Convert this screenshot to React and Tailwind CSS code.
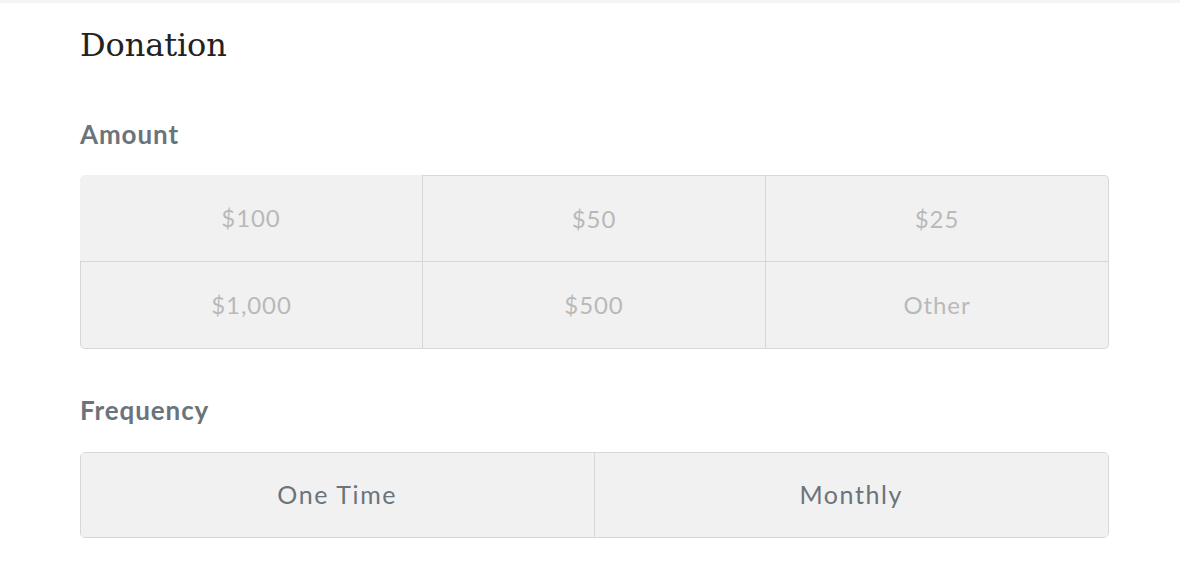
import React from 'react';

const amounts = ['$100', '$50', '$25', '$1,000', '$500', 'Other'];

// per-cell borders so the top-left cell reads borderless like the reference
const amountCellBorders = [
  'border-r border-b rounded-tl-[5px]',
  'border-t border-r border-b',
  'border-t border-r border-b rounded-tr-[5px]',
  'border-l border-r border-b rounded-bl-[5px]',
  'border-r border-b',
  'border-r border-b rounded-br-[5px]',
];

const sans = { fontFamily: "'Source Sans Pro', Lato, 'Noto Sans', sans-serif" };

export default function App() {
  return (
    <div className="w-[1180px] h-[582px] bg-white relative overflow-hidden" style={sans}>
      <div className="h-[3px] bg-[#f4f5f6]" />
      <div className="pl-[80px] w-[1109px]">
        <h1
          className="mt-[22px] text-[32px] leading-[40px] text-[#222] tracking-[-0.1px]"
          style={{ fontFamily: "'DejaVu Serif', 'Liberation Serif', serif" }}
        >
          Donation
        </h1>

        <div className="mt-[53px] text-[26px] leading-[32px] font-bold text-[#6b737b] tracking-[0.9px]">
          Amount
        </div>
        <div className="mt-[25px] grid grid-cols-3">
          {amounts.map((a, i) => (
            <button
              key={a}
              className={`h-[87px] flex items-center justify-center bg-[#f1f1f1] border-[#d7d7d7] text-[24px] text-[#b9b9b9] tracking-[0.9px] ${amountCellBorders[i]}`}
            >
              {a}
            </button>
          ))}
        </div>

        <div className="mt-[45px] text-[26px] leading-[32px] font-bold text-[#6b737b] tracking-[0.9px]">
          Frequency
        </div>
        <div className="mt-[26px] grid grid-cols-2 border border-[#d7d7d7] rounded-[5px] overflow-hidden">
          <button className="h-[84px] flex items-center justify-center bg-[#f1f1f1] border-r border-[#d7d7d7] text-[25px] text-[#6b737b] tracking-[1.6px]">
            One Time
          </button>
          <button className="h-[84px] flex items-center justify-center bg-[#f1f1f1] text-[25px] text-[#6b737b] tracking-[1.6px]">
            Monthly
          </button>
        </div>
      </div>
    </div>
  );
}
